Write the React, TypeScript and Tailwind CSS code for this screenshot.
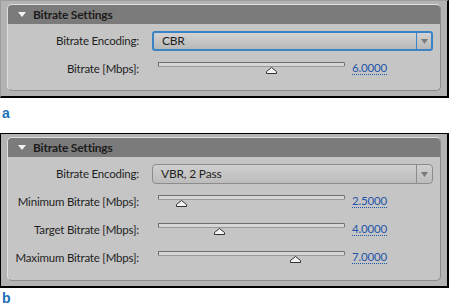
import React from "react"

type SliderRow = { label: string; value: string; pos: number }

function Thumb() {
    return (
        <svg width="11" height="7" viewBox="0 0 11 7" className="block">
            <path d="M0.5 6.5 L0.5 4.5 L5.5 0.5 L10.5 4.5 L10.5 6.5 Z" fill="#f4f4f4" stroke="#333" strokeWidth="1" />
        </svg>
    )
}

function Slider({ pos }: { pos: number }) {
    return (
        <div className="flex flex-col w-[193px] pl-[6px] mt-[2px]">
            <div className="h-[5px] w-[187px] border border-[#6e6e6e] border-b-[#9a9a9a] bg-[#d6d6d6] rounded-r-[2px]" />
            <div className="h-[7px] relative">
                <div className="absolute top-0" style={{ left: pos - 5 }}>
                    <Thumb />
                </div>
            </div>
        </div>
    )
}

function Label({ children }: { children: React.ReactNode }) {
    return <div className="w-[132px] flex-none flex justify-end whitespace-nowrap pr-[1px] text-[#1f1f1f]">{children}</div>
}

function Row({ label, value, pos }: SliderRow) {
    return (
        <div className="flex items-center h-[28px]">
            <div className="mt-[3px]">
                <Label>{label}</Label>
            </div>
            <div className="ml-[12px]">
                <Slider pos={pos} />
            </div>
            <span className="ml-[7px] mt-[1px] text-[#1f55a8] border-b border-dotted border-[#1f55a8] leading-[13px]">{value}</span>
        </div>
    )
}

function Dropdown({ text, focused }: { text: string; focused?: boolean }) {
    return (
        <div
            className={
                focused
                    ? "flex w-[281px] h-[20px] rounded-[3px] border-2 border-[#3a83c4] bg-gradient-to-b from-[#d2d2d2] to-[#b9b9b9]"
                    : "flex w-[281px] h-[20px] rounded-[4px] border border-[#8c8c8c] bg-gradient-to-b from-[#d0d0d0] to-[#bcbcbc]"
            }
        >
            <div className="flex-1 flex items-center pl-[8px] text-[12px] text-[#1f1f1f]">{text}</div>
            <div className={focused ? "w-[15px] border-l border-[#3a83c4] flex items-center justify-center" : "w-[16px] border-l border-[#8c8c8c] flex items-center justify-center"}>
                <svg width="7" height="5" viewBox="0 0 7 5">
                    <path d="M0 0 L7 0 L3.5 5 Z" fill="#7a7a7a" />
                </svg>
            </div>
        </div>
    )
}

function Panel({ encoding, focused, rows, outer }: { encoding: string; focused?: boolean; rows: SliderRow[]; outer: string }) {
    return (
        <div className={"w-[449px] flex flex-col bg-[#b3b3b3] px-[6px] pt-[3px] pb-[5px] " + outer}>
            <div className="flex-1 rounded-[5px] bg-[#c5c5c5] border border-[#e0e0e0] border-r-[#8d8d8d] border-b-[#8d8d8d] overflow-hidden">
                <div className="h-[19px] bg-[#7b7b7b] flex items-center">
                    <svg width="8" height="6" viewBox="0 0 8 6" className="ml-[10px]">
                        <path d="M0 0 L8 0 L4 5 Z" fill="#f2f2f2" />
                    </svg>
                    <span className="ml-[7px] font-bold text-[12px] text-[#1c1c1c]">Bitrate Settings</span>
                </div>
                <div className="pt-[7px]">
                    <div className="flex items-center h-[20px]">
                        <Label>Bitrate Encoding:</Label>
                        <div className="ml-[12px]">
                            <Dropdown text={encoding} focused={focused} />
                        </div>
                    </div>
                    <div className="pt-[2px]">
                        {rows.map((r) => (
                            <Row key={r.label} {...r} />
                        ))}
                    </div>
                </div>
            </div>
        </div>
    )
}

export default function App() {
    return (
        <div className="w-[454px] h-[307px] bg-white text-[11.5px] leading-[14px] tracking-[-0.2px] font-['Lato',sans-serif] overflow-hidden">
            <Panel
                encoding="CBR"
                focused
                outer="h-[98px] border-t border-l border-t-[#9c9c9c] border-l-[#9c9c9c] border-r-2 border-b-2 border-r-black border-b-black"
                rows={[{ label: "Bitrate [Mbps]:", value: "6.0000", pos: 113 }]}
            />
            <div className="h-[35px] pl-[2px] pt-[8px] text-[#1d6fb8] font-bold text-[14px] tracking-normal font-['Liberation_Sans',sans-serif]">a</div>
            <Panel
                encoding="VBR, 2 Pass"
                outer="h-[155px] border border-black border-r-2 border-b-2"
                rows={[
                    { label: "Minimum Bitrate [Mbps]:", value: "2.5000", pos: 23 },
                    { label: "Target Bitrate [Mbps]:", value: "4.0000", pos: 61 },
                    { label: "Maximum Bitrate [Mbps]:", value: "7.0000", pos: 137 },
                ]}
            />
            <div className="pl-[2px] pt-[3px] text-[#1d6fb8] font-bold text-[14px] tracking-normal font-['Liberation_Sans',sans-serif]">b</div>
        </div>
    )
}
